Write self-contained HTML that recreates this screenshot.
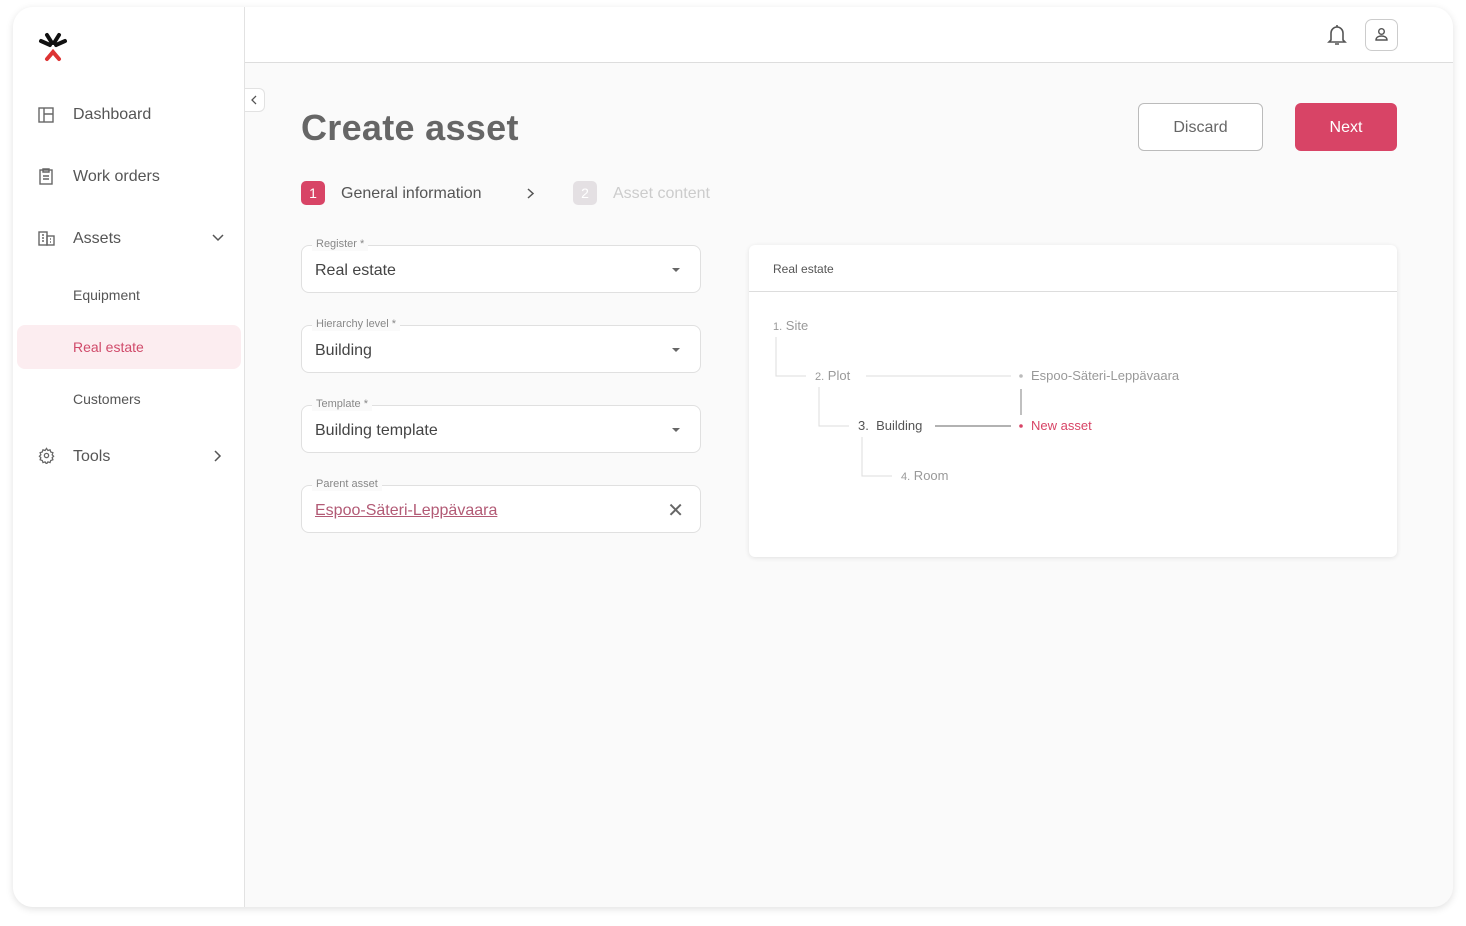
<!DOCTYPE html><html><head><style>
*{box-sizing:border-box;margin:0;padding:0}
body{width:1466px;height:926px;background:#fff;font-family:"Liberation Sans",sans-serif;color:#555;position:relative;overflow:hidden}
.app{position:absolute;left:13px;top:7px;width:1440px;height:900px;border-radius:20px;background:#fafafa;box-shadow:0 2px 8px rgba(0,0,0,.12);overflow:hidden}
.side{position:absolute;left:0;top:0;width:232px;height:900px;background:#fff;border-right:1px solid #e2e2e2}
.hdr{position:absolute;left:232px;top:0;right:0;height:56px;background:#fff;border-bottom:1px solid #ddd}
.a{position:absolute;white-space:nowrap}
.nav{font-size:16px;color:#555}
.sub{font-size:14px;color:#555}
.field{position:absolute;left:288px;width:400px;height:48px;border:1px solid #e0e0e0;border-radius:8px;background:#fff}
.field .lbl{position:absolute;left:10px;top:-9px;background:#fafafa;padding:0 4px;font-size:11px;color:#888;line-height:14px}
.field .val{position:absolute;left:13px;top:16px;font-size:16px;color:#444}
.caret{position:absolute;right:20px;top:22px;width:0;height:0;border-left:4px solid transparent;border-right:4px solid transparent;border-top:4px solid #666}
.t{font-size:13px;color:#999}
</style></head><body>
<div class="app">
<div class="side">
<svg class="a" style="left:24px;top:24px" width="32" height="32" viewBox="0 0 32 32"><path d="M4 10 L13 14 M28 10 L19 14 M10 4 L15 12 M22 4 L17 12" stroke="#111" stroke-width="4" stroke-linecap="round"/><path d="M10 28 L16 21 L22 28" stroke="#d33" stroke-width="4" fill="none" stroke-linecap="round"/></svg>
<svg class="a" style="left:25px;top:100px" width="16" height="16" viewBox="0 0 16 16" fill="none" stroke="#666" stroke-width="1.4"><rect x="1" y="1" width="14" height="14"/><path d="M6 1v14M6 7h9"/></svg>
<div class="a nav" style="left:60px;top:99px">Dashboard</div>
<svg class="a" style="left:25px;top:161px" width="16" height="17" viewBox="0 0 16 17" fill="none" stroke="#666" stroke-width="1.4"><rect x="2" y="2" width="12" height="14"/><path d="M5 1h6v3H5zM5 8h6M5 11h6"/></svg>
<div class="a nav" style="left:60px;top:161px">Work orders</div>
<svg class="a" style="left:25px;top:224px" width="17" height="15" viewBox="0 0 17 15" fill="none" stroke="#666" stroke-width="1.4"><rect x="1" y="1" width="8" height="13"/><rect x="9" y="5" width="7" height="9"/><path d="M4 4h2M4 7h2M4 10h2M12 8h1M12 11h1"/></svg>
<div class="a nav" style="left:60px;top:223px">Assets</div>
<svg class="a" style="left:199px;top:227px" width="12" height="8"><path d="M1 1l5 5 5-5" stroke="#555" stroke-width="1.5" fill="none"/></svg>
<div class="a sub" style="left:60px;top:280px">Equipment</div>
<div class="a" style="left:4px;top:318px;width:224px;height:44px;background:#fcedf0;border-radius:8px"></div>
<div class="a sub" style="left:60px;top:332px;color:#d04a6a">Real estate</div>
<div class="a sub" style="left:60px;top:384px">Customers</div>
<svg class="a" style="left:25px;top:440px" width="17" height="17" viewBox="0 0 24 24" fill="none" stroke="#666" stroke-width="1.8"><circle cx="12" cy="12" r="3"/><path d="M12 2l2 3 3-1 1 3 3 1-1 3 2 2-2 2 1 3-3 1-1 3-3-1-2 3-2-3-3 1-1-3-3-1 1-3-2-2 2-2-1-3 3-1 1-3 3 1z"/></svg>
<div class="a nav" style="left:60px;top:441px">Tools</div>
<svg class="a" style="left:201px;top:443px" width="8" height="12"><path d="M1 1l5 5-5 5" stroke="#555" stroke-width="1.5" fill="none"/></svg>
</div>
<div class="hdr">
<svg class="a" style="left:1082px;top:17px" width="20" height="22" viewBox="0 0 20 22" fill="none" stroke="#555" stroke-width="1.6"><path d="M4 16V9a6 6 0 0112 0v7l2 2H2z"/><path d="M8 20h4M10 1v2"/></svg>
<div class="a" style="left:1120px;top:12px;width:33px;height:32px;border:1px solid #ccc;border-radius:7px"></div>
<svg class="a" style="left:1129px;top:20px" width="15" height="15" viewBox="0 0 15 15" fill="none" stroke="#555" stroke-width="1.4"><circle cx="7.5" cy="4.5" r="2.8"/><path d="M2 13c0-3 3-4 5.5-4s5.5 1 5.5 4z"/></svg>
</div>
<div class="a" style="left:232px;top:81px;width:20px;height:24px;background:#fff;border:1px solid #e2e2e2;border-left:none;border-radius:0 6px 6px 0"></div>
<svg class="a" style="left:238px;top:88px" width="6" height="10"><path d="M5 1L1 5l4 4" stroke="#555" stroke-width="1.3" fill="none"/></svg>
<div class="a" style="left:288px;top:100px;font-size:36px;color:#5a5a5a;font-weight:bold;letter-spacing:0.3px;color:#666">Create asset</div>
<div class="a" style="left:1125px;top:96px;width:125px;height:48px;border:1px solid #bbb;border-radius:6px;background:#fff;text-align:center;line-height:48px;font-size:16px;color:#666">Discard</div>
<div class="a" style="left:1282px;top:96px;width:102px;height:48px;border-radius:6px;background:#d84466;text-align:center;line-height:50px;font-size:16px;color:#fff">Next</div>
<div class="a" style="left:288px;top:174px;width:24px;height:24px;border-radius:5px;background:#d84466;color:#fff;text-align:center;line-height:24px;font-size:14px">1</div>
<div class="a" style="left:328px;top:178px;font-size:16px;color:#555">General information</div>
<svg class="a" style="left:514px;top:181px" width="8" height="11"><path d="M1 1l5 4.5L1 10" stroke="#555" stroke-width="1.5" fill="none"/></svg>
<div class="a" style="left:560px;top:174px;width:24px;height:24px;border-radius:5px;background:#e4e0e3;color:#fff;text-align:center;line-height:24px;font-size:14px">2</div>
<div class="a" style="left:600px;top:178px;font-size:16px;color:#ccc">Asset content</div>
<div class="field" style="top:238px"><div class="lbl">Register *</div><div class="val">Real estate</div><div class="caret"></div></div>
<div class="field" style="top:318px"><div class="lbl">Hierarchy level *</div><div class="val">Building</div><div class="caret"></div></div>
<div class="field" style="top:398px"><div class="lbl">Template *</div><div class="val">Building template</div><div class="caret"></div></div>
<div class="field" style="top:478px"><div class="lbl">Parent asset</div><div class="val" style="color:#b25a75;text-decoration:underline">Espoo-Säteri-Leppävaara</div><div class="a" style="right:16px;top:12px;font-size:20px;color:#666">✕</div></div>
<div class="a" style="left:736px;top:238px;width:648px;height:312px;background:#fff;border-radius:6px;box-shadow:0 1px 5px rgba(0,0,0,.1)">
<div style="height:47px;border-bottom:1px solid #ddd;padding:17px 24px;font-size:12px;color:#555">Real estate</div>
<svg class="a" style="left:0;top:0" width="648" height="312" fill="none"><path d="M27 92v39h30M70 142v39h30M113 192v39h30" stroke="#ddd"/><path d="M117 131h145" stroke="#ddd"/><path d="M186 181h76" stroke="#666"/><path d="M272 144v26" stroke="#aaa" stroke-width="1.5"/><circle cx="272" cy="131" r="1.8" fill="#bbb"/><circle cx="272" cy="181" r="1.8" fill="#d84466"/></svg>
<div class="a t" style="left:24px;top:73px"><span style="font-size:11px">1.</span> Site</div>
<div class="a t" style="left:66px;top:123px"><span style="font-size:11px">2.</span> Plot</div>
<div class="a t" style="left:109px;top:173px;color:#555">3.&nbsp; Building</div>
<div class="a t" style="left:152px;top:223px"><span style="font-size:11px">4.</span> Room</div>
<div class="a t" style="left:282px;top:123px">Espoo-Säteri-Leppävaara</div>
<div class="a t" style="left:282px;top:173px;color:#d84466">New asset</div>
</div>
</div>
</body></html>
